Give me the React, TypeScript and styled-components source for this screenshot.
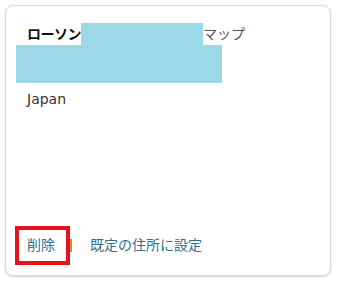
import React from "react";
import styled, { createGlobalStyle } from "styled-components";

const Global = createGlobalStyle`
  html, body { margin: 0; padding: 0; background: #ffffff; }
  body { font-family: "DejaVu Sans", "Noto Sans CJK JP", sans-serif; }
`;

const Page = styled.div`
  width: 340px;
  height: 284px;
  padding: 5px 0 0 5px;
  box-sizing: border-box;
`;

const Card = styled.div`
  width: 326px;
  height: 271px;
  box-sizing: border-box;
  border: 1px solid #d5d9d9;
  border-radius: 8px;
  box-shadow: 0 1px 2px rgba(0, 0, 0, 0.18);
  padding: 17px 20px 20px 21px;
  display: flex;
  flex-direction: column;
  color: #333;
  font-size: 14px;
`;

const NameRow = styled.div`
  display: flex;
  align-items: center;
  height: 22px;
  line-height: 22px;
`;

const Name = styled.span`
  font-weight: 700;
  color: #111;
  letter-spacing: -0.5px;
`;

const Muted = styled.span`
  color: #555;
`;

const Redact = styled.span<{ $w: number; $h: number; $ml?: number }>`
  display: block;
  flex: none;
  width: ${(p) => p.$w}px;
  height: ${(p) => p.$h}px;
  margin-left: ${(p) => p.$ml ?? 0}px;
  background: #9dd8e9;
`;

const Country = styled.div`
  margin-top: 6px;
  line-height: 20px;
  color: #333;
`;

const Actions = styled.div`
  margin-top: auto;
  display: flex;
  align-items: center;
  line-height: 20px;
  height: 20px;
`;

const Link = styled.a<{ $marked?: boolean }>`
  position: relative;
  color: #31708f;
  text-decoration: none;
  ${(p) =>
    p.$marked
      ? `
  &::after {
    content: "";
    position: absolute;
    left: -12px;
    top: -9px;
    width: 55px;
    height: 39px;
    box-sizing: border-box;
    border: 4px solid #e3131d;
  }`
      : ""}
`;

const Sep = styled.span`
  display: block;
  width: 2px;
  height: 13px;
  background: #c4933f;
  margin: 1px 18px 0 15px;
`;

export default function App() {
  return (
    <>
      <Global />
      <Page>
        <Card>
          <NameRow>
            <Name>ローソン</Name>
            <Redact $w={122} $h={22} />
            <Muted>マップ</Muted>
          </NameRow>
          <Redact $w={206} $h={38} $ml={-11} />
          <Country>Japan</Country>
          <Actions>
            <Link $marked>削除</Link>
            <Sep />
            <Link>既定の住所に設定</Link>
          </Actions>
        </Card>
      </Page>
    </>
  );
}
